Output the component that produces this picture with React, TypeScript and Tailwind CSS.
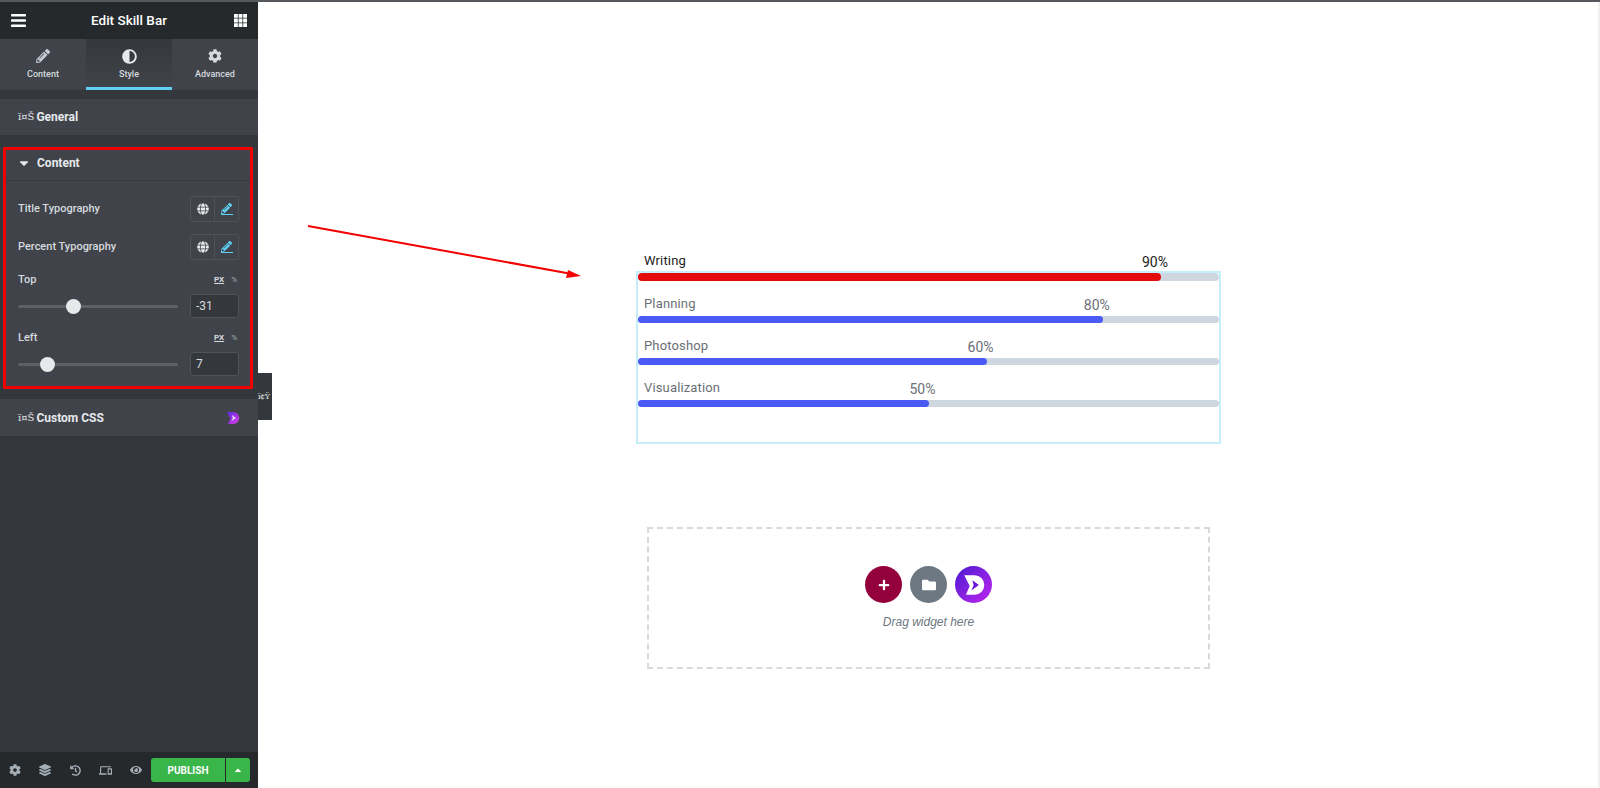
import { FaAdjust, FaBars, FaCaretDown, FaCaretUp, FaCog, FaEye, FaFolder, FaGlobe, FaHistory, FaLayerGroup, FaPencilAlt, FaPlus } from 'react-icons/fa';
import { MdDevices } from 'react-icons/md';
import { TfiLayoutGrid3Alt } from 'react-icons/tfi';

const SKILLS = [
  { label: 'Writing', value: 90, active: true, height: 'h-2' },
  { label: 'Planning', value: 80, active: false, height: 'h-[7px]' },
  { label: 'Photoshop', value: 60, active: false, height: 'h-[7px]' },
  { label: 'Visualization', value: 50, active: false, height: 'h-[7px]' },
];

function LogoMark({ className, fill, cut }: { className: string; fill: string; cut: string }) {
  return (
    <svg viewBox="0 0 24 24" className={className}>
      <defs>
        <linearGradient id="logoGrad" x1="0" y1="0" x2="1" y2="1">
          <stop offset="0" stopColor="#5b2be8" />
          <stop offset="1" stopColor="#e03ce0" />
        </linearGradient>
      </defs>
      <path d="M3 3h9.5a9 9 0 0 1 0 18H4.5l3.5-8z" fill={fill} />
      <path d="M10.5 7.5l6 4.5-7 5 2.2-4.8z" fill={cut} />
    </svg>
  );
}

function TypographyRow({ label }: { label: string }) {
  return (
    <div className="flex h-[26px] items-center justify-between">
      <span className="text-[11px] font-medium text-[#d5dadf]">{label}</span>
      <div className="flex h-[26px] w-[49px] rounded-[3px] border border-[#4f5358]">
        <div className="flex flex-1 items-center justify-center border-r border-[#4f5358] text-[#e6e8ea]">
          <FaGlobe className="size-3" />
        </div>
        <div className="flex flex-1 flex-col items-center justify-center text-[#5fd0f3]">
          <FaPencilAlt className="size-[11px]" />
          <div className="h-px w-3 bg-[#5fd0f3]" />
        </div>
      </div>
    </div>
  );
}

function SliderRow({ label, value, thumb }: { label: string; value: string; thumb: string }) {
  return (
    <div>
      <div className="flex h-4 items-center justify-between">
        <span className="text-[11px] font-medium text-[#d5dadf]">{label}</span>
        <div className="flex items-center gap-[7px] pr-[2px] text-[8px] text-[#a4afb7]">
          <span className="font-bold text-[#d5dadf] underline">PX</span>
          <span>%</span>
        </div>
      </div>
      <div className="mt-[6px] flex items-center justify-between">
        <div className="relative h-[3px] w-[160px] rounded-full bg-[#5d6166]">
          <div className={`absolute top-[-6px] size-[15px] rounded-full bg-[#e6e8ea] ${thumb}`} />
        </div>
        <div className="flex h-[24px] w-[49px] items-center rounded-[3px] border border-[#4f5358] bg-[#34383c] px-[5px] text-xs text-[#d5dadf]">
          {value}
        </div>
      </div>
    </div>
  );
}

function Sidebar() {
  return (
    <aside className="relative flex h-full w-[258px] shrink-0 flex-col bg-[#34383c]">
      <header className="flex h-[37px] items-center justify-between bg-[#26292c] pl-[10px] pr-[11px] text-white">
        <FaBars className="size-[17px]" />
        <span className="mr-[3px] text-[13.5px] font-medium">Edit Skill Bar</span>
        <TfiLayoutGrid3Alt className="size-[13px]" />
      </header>

      <div className="flex h-[51px] bg-[#404349] text-[#d5dadf]">
        <div className="flex w-[86px] flex-col items-center pt-[10px]">
          <FaPencilAlt className="size-[14px] text-[#c2cbd2]" />
          <span className="mt-[5px] text-[9px] font-medium">Content</span>
        </div>
        <div className="flex w-[86px] flex-col items-center border-b-[3px] border-[#5fd0f3] bg-gradient-to-b from-[#34383c] to-[#404349] pt-[10px]">
          <FaAdjust className="size-[15px] text-[#e6e9ec]" />
          <span className="mt-[4px] text-[9px] font-medium">Style</span>
        </div>
        <div className="flex w-[86px] flex-col items-center pt-[10px]">
          <FaCog className="size-[14px] text-[#d5dadf]" />
          <span className="mt-[5px] text-[9px] font-medium">Advanced</span>
        </div>
      </div>

      <section className="mt-[9px] flex h-[36px] items-center gap-[2px] bg-[#404349] pl-[18px] text-xs font-bold text-[#e6e9ec]">
        <span className="text-[10px] font-normal [font-family:'DejaVu_Serif',serif]">ï¤Š</span>
        General
      </section>

      <section className="ml-[3px] mt-[12px] h-[242px] w-[250px] border-[3px] border-[#f00000] bg-[#404349]">
        <div className="flex h-[31px] items-center gap-[6px] border-b border-[#373a40] pb-[4px] pl-[11px] text-xs font-bold text-[#e6e9ec]">
          <FaCaretDown className="size-[14px]" />
          Content
        </div>
        <div className="flex flex-col pl-[12px] pr-[11px] pt-[15px]">
          <TypographyRow label="Title Typography" />
          <div className="mt-[12px]">
            <TypographyRow label="Percent Typography" />
          </div>
          <div className="mt-[12px]">
            <SliderRow label="Top" value="-31" thumb="left-[48px]" />
          </div>
          <div className="mt-[12px]">
            <SliderRow label="Left" value="7" thumb="left-[22px]" />
          </div>
        </div>
      </section>

      <section className="mt-[10px] flex h-[37px] items-center gap-[2px] bg-[#404349] pl-[18px] pr-[17px] text-xs font-bold text-[#e6e9ec]">
        <span className="text-[10px] font-normal [font-family:'DejaVu_Serif',serif]">ï¤Š</span>
        <span className="flex-1">Custom CSS</span>
        <LogoMark className="size-[16px]" fill="url(#logoGrad)" cut="#e8d8f8" />
      </section>

      <footer className="mt-auto flex h-[36px] items-center bg-[#26292c] pl-[9px] pr-[8px] text-[#a4afb7]">
        <div className="flex flex-1 items-center justify-between pr-[9px]">
          <FaCog className="size-[12px]" />
          <FaLayerGroup className="size-[12px]" />
          <FaHistory className="size-[11px]" />
          <MdDevices className="size-[13px]" />
          <FaEye className="size-[12px]" />
        </div>
        <div className="flex h-[24px] w-[99px] rounded-[3px] bg-[#39b54a] text-white">
          <span className="flex flex-1 items-center justify-center border-r border-[#26292c] text-[10px] font-bold">PUBLISH</span>
          <span className="flex w-[24px] items-center justify-center">
            <FaCaretUp className="size-[10px]" />
          </span>
        </div>
      </footer>

      <div className="absolute left-full top-[371px] flex h-[47px] w-[14px] items-center bg-[#34383c] text-[8px] tracking-[-0.5px] text-[#e6e9ec] [font-family:'DejaVu_Serif',serif]">
        ï¢Ÿ
      </div>
    </aside>
  );
}

function SkillBars() {
  return (
    <div className="ml-[378px] h-[173px] w-[585px] border-2 border-[#c5edfa]">
      {SKILLS.map((skill) => (
        <div key={skill.label} className={`relative mb-[35px] rounded-full bg-[#ced7e0] ${skill.height}`}>
          <div
            className={`h-full rounded-full ${skill.active ? 'bg-[#e30b0b]' : 'bg-[#4a5bf5]'}`}
            style={{ width: `${skill.value}%` }}
          />
          <div
            className={`absolute bottom-full left-[6px] mb-[3px] flex items-end justify-between text-[13px] ${skill.active ? 'text-[#222222]' : 'text-[#6b6f75]'}`}
            style={{ width: `calc(${skill.value}% + 1px)` }}
          >
            <span className="tracking-[0.15px]">{skill.label}</span>
            <span className="translate-y-[2px] text-sm">{skill.value}%</span>
          </div>
        </div>
      ))}
    </div>
  );
}

function DropZone() {
  return (
    <div className="ml-[389px] mt-[83px] flex h-[142px] w-[563px] flex-col items-center border-2 border-dashed border-[#d5dadf] pt-[37px]">
      <div className="flex gap-[8px]">
        <div className="flex size-[37px] items-center justify-center rounded-full bg-[#93003c] text-white">
          <FaPlus className="size-[12px]" />
        </div>
        <div className="flex size-[37px] items-center justify-center rounded-full bg-[#6d7882] text-white">
          <FaFolder className="size-[14px]" />
        </div>
        <div className="flex size-[37px] items-center justify-center rounded-full bg-gradient-to-br from-[#4a10d0] to-[#c01cf0] text-white">
          <LogoMark className="size-[26px]" fill="white" cut="#6a14dc" />
        </div>
      </div>
      <span className="mt-[11px] text-xs italic text-[#6d7882] [font-family:'Liberation_Sans',sans-serif]">Drag widget here</span>
    </div>
  );
}

export default function App() {
  return (
    <div className="flex h-[788px] w-[1600px] flex-col overflow-hidden bg-white [font-family:Roboto,sans-serif]">
      <div className="h-[2px] shrink-0 bg-[#55585c]" />
      <div className="relative flex min-h-0 flex-1">
        <Sidebar />
        <main className="flex-1 border-r-2 border-[#f1f1f1] pt-[269px]">
          <SkillBars />
          <DropZone />
        </main>
        <svg className="pointer-events-none absolute left-[300px] top-[214px]" width="290" height="70" viewBox="0 0 290 70">
          <path d="M8 10 L272 58" stroke="#f30000" strokeWidth="2" />
          <path d="M281 60 L268 54 L266 62 Z" fill="#f30000" />
        </svg>
      </div>
    </div>
  );
}
